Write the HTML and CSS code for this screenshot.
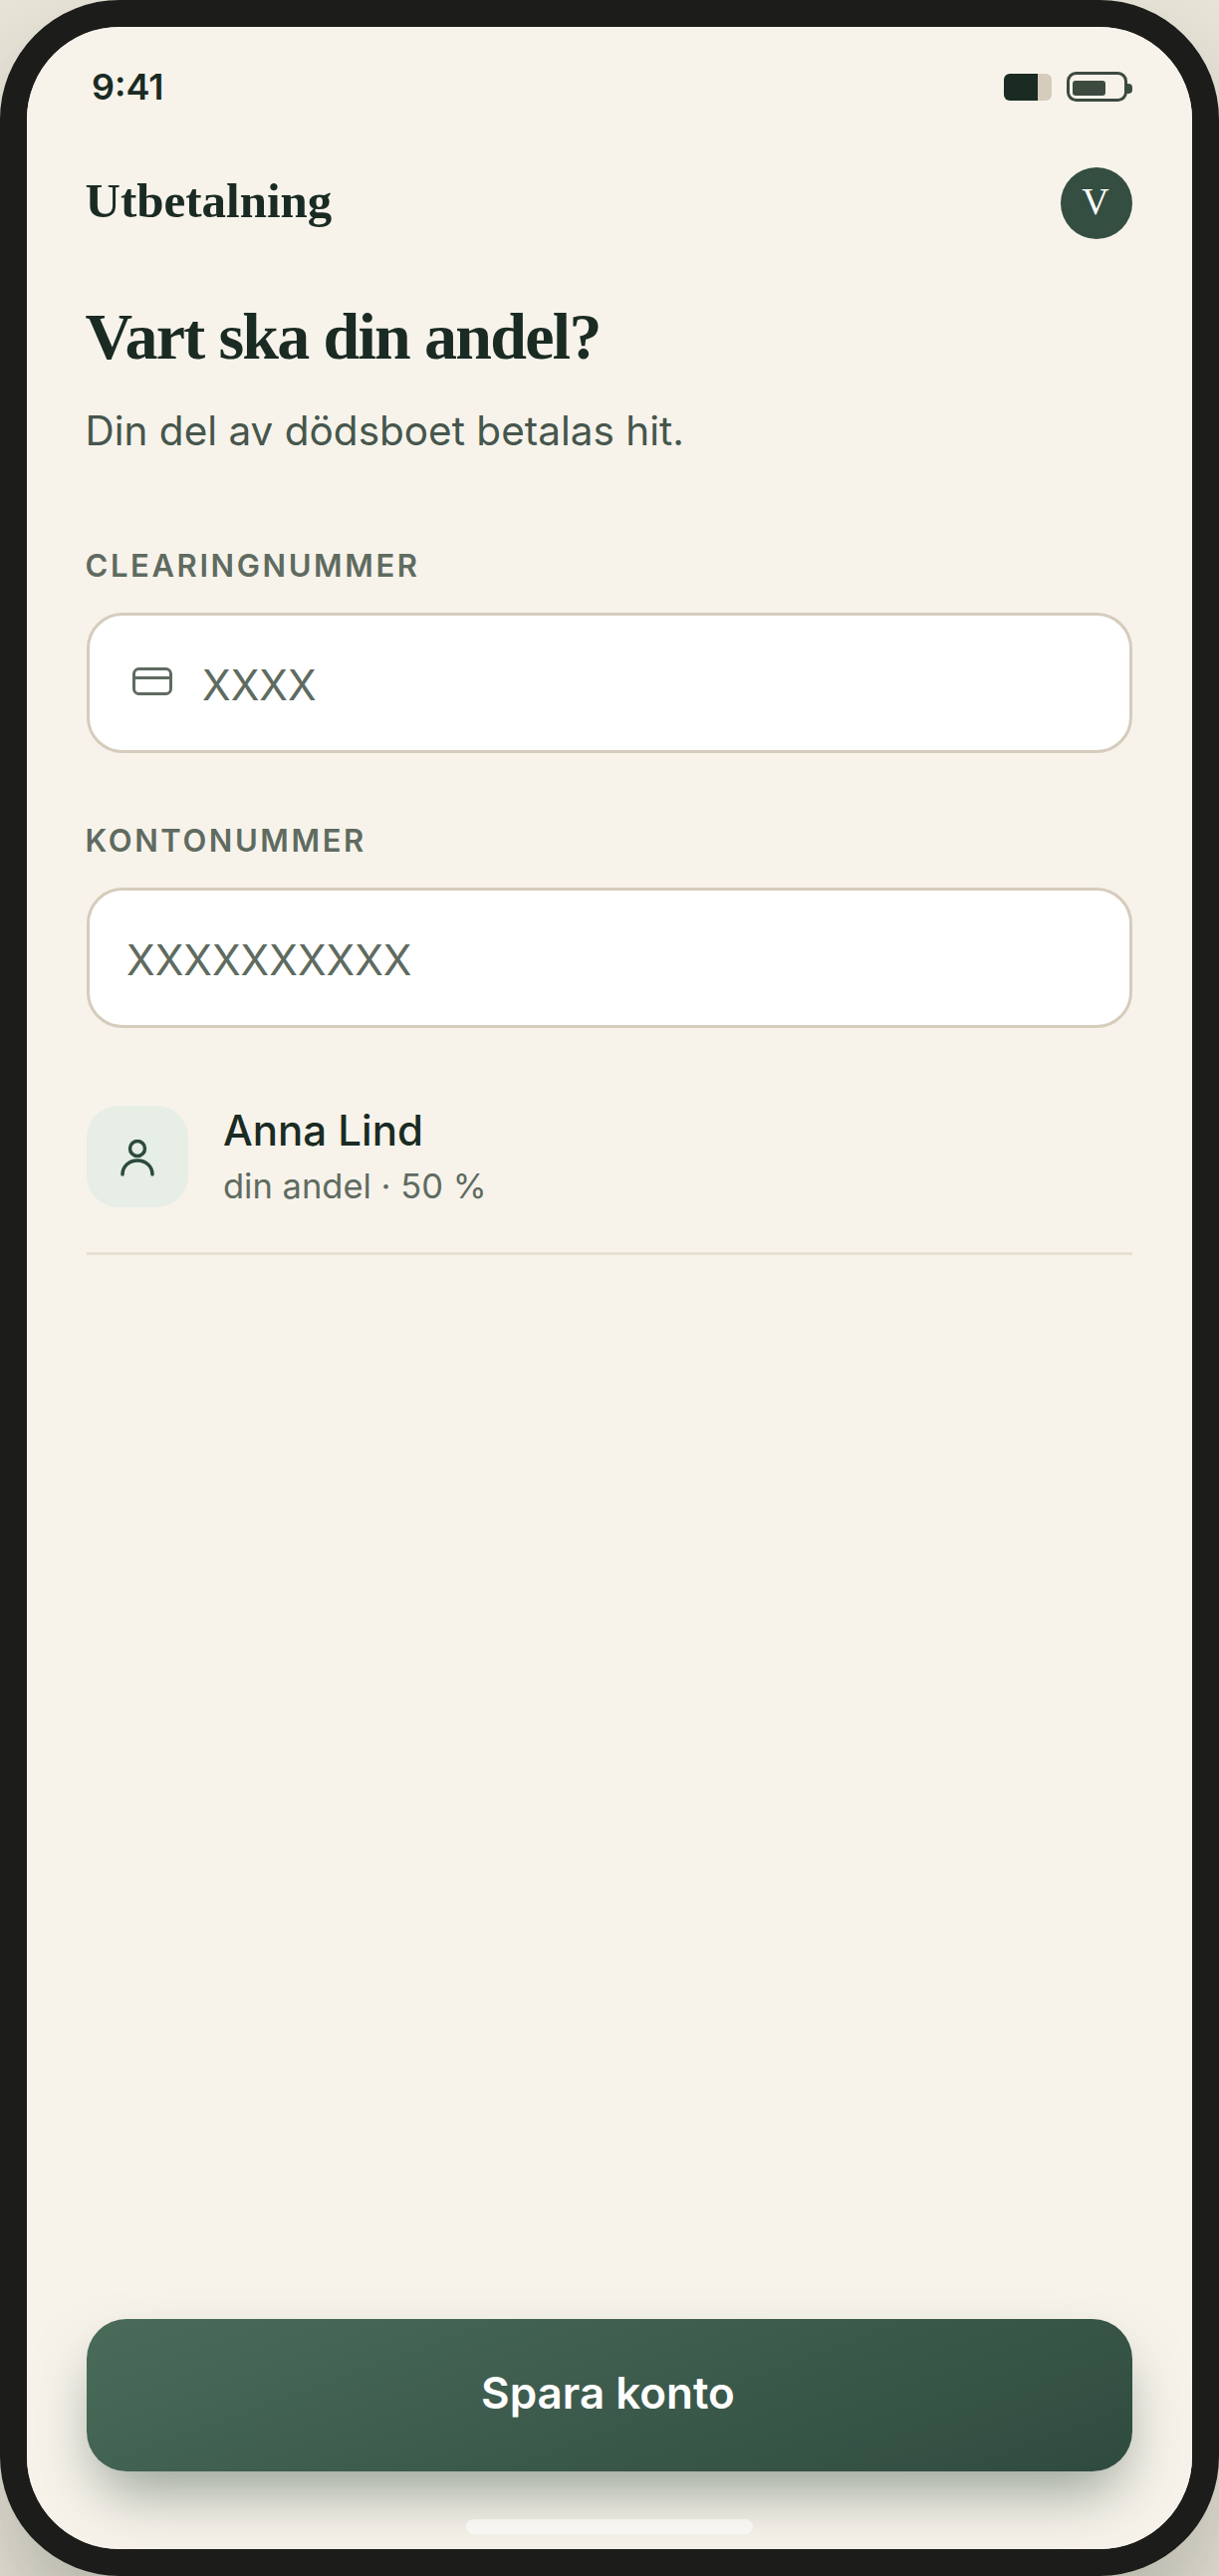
FILE: index.html
```html
<!DOCTYPE html>
<html lang="sv">
  <head>
    <meta charset="UTF-8" />
    <meta name="viewport" content="width=device-width, initial-scale=1.0" />
    <title>Utbetalning</title>
    <link rel="stylesheet" href="styles.css">
  </head>

  <body>
    <div class="phone">
      <div class="screen">
        <div class="status">
          <span class="time">9:41</span>
          <div class="status-icons">
            <div class="signal"><div class="signal-fill"></div></div>
            <svg class="battery" width="66" height="30" viewBox="0 0 66 30">
              <rect x="1.5" y="1.5" width="58" height="27" rx="8" fill="none" stroke="#3d4a40" stroke-width="3" />
              <rect x="6" y="9" width="33" height="15" rx="3" fill="#3d4a40" />
              <path d="M60 12h2a4 4 0 0 1 4 4v2a4 4 0 0 1-4 4h-2z" fill="#3d4a40" />
            </svg>
          </div>
        </div>

        <main class="content">
          <header class="topbar">
            <span class="topbar-title">Utbetalning</span>
            <div class="avatar">V</div>
          </header>

          <h1 class="title">Vart ska din andel?</h1>
          <p class="lead">Din del av dödsboet betalas hit.</p>

          <label class="field-label" for="clearing">CLEARINGNUMMER</label>
          <div class="field">
            <svg class="card-icon" width="40" height="28" viewBox="0 0 40 28" fill="none" stroke="#5f6b60" stroke-width="3">
              <rect x="1.5" y="1.5" width="37" height="25" rx="5" />
              <path d="M1.5 10.5h37" />
            </svg>
            <input id="clearing" class="field-input" placeholder="XXXX" />
          </div>

          <label class="field-label" for="konto">KONTONUMMER</label>
          <div class="field">
            <input id="konto" class="field-input" placeholder="XXXXXXXXXX" />
          </div>

          <div class="heir">
            <div class="heir-icon">
              <svg width="34" height="38" viewBox="0 0 34 38" fill="none" stroke="#2d4a3e" stroke-width="3.500" stroke-linecap="round">
                <circle cx="17" cy="9" r="7.5" />
                <path d="M2 35c0-8 6.500-14 15-14s15 6 15 14" />
              </svg>
            </div>
            <div class="heir-text">
              <div class="heir-name">Anna Lind</div>
              <div class="heir-share">din andel · 50 %</div>
            </div>
          </div>
        </main>

        <footer class="footer">
          <button class="save">Spara konto</button>
          <div class="home-bar"></div>
        </footer>
      </div>
    </div>
  </body>
</html>
```

FILE: styles.css
```css
* {
  box-sizing: border-box;
  margin: 0;
  padding: 0;
}

:root {
  --ink: #1a2b23;
  --green: #344e41;
  --muted: #5f6b60;
  --line: #d6ccbc;
  --paper: #f7f3eb;
}

html,
body {
  width: 1224px;
  height: 2586px;
  overflow: hidden;
}

body {
  background: #e8e4d8;
  font-family: Inter, "Liberation Sans", sans-serif;
  color: var(--ink);
}

.phone {
  width: 1224px;
  height: 2586px;
  border: 27px solid #1c1c1a;
  border-radius: 120px;
  background: var(--paper);
  box-shadow: 0 60px 100px rgba(30, 40, 30, 0.25);
}

.screen {
  height: 100%;
  border-radius: 93px;
  overflow: hidden;
  display: flex;
  flex-direction: column;
  background: var(--paper);
}

/* status bar */
.status {
  display: flex;
  justify-content: space-between;
  align-items: center;
  height: 60px;
  margin-top: 30px;
  padding: 0 60px 0 65px;
}

.time {
  font-size: 36px;
  font-weight: 600;
}

.status-icons {
  display: flex;
  align-items: center;
  gap: 15px;
}

.signal {
  width: 48px;
  height: 27px;
  border-radius: 6px;
  background: var(--line);
  overflow: hidden;
}

.signal-fill {
  width: 34px;
  height: 100%;
  background: var(--ink);
}

.battery {
  display: block;
}

/* main */
.content {
  flex: 1;
  padding: 51px 60px 0;
}

.topbar {
  display: flex;
  justify-content: space-between;
  align-items: center;
}

.topbar-title {
  font-family: "Liberation Serif", serif;
  font-size: 49px;
  font-weight: 700;
  margin: -5px 0 0 -1.500px;
}

.avatar {
  width: 72px;
  height: 72px;
  padding: 0 2px 4px 0;
  border-radius: 50%;
  background: var(--green);
  color: #fff;
  font-family: "Liberation Serif", serif;
  font-size: 38px;
  display: flex;
  align-items: center;
  justify-content: center;
}

.title {
  font-family: "Liberation Serif", serif;
  font-size: 66px;
  font-weight: 700;
  letter-spacing: -1.7px;
  line-height: 80px;
  margin: 58px 0 0 -1.500px;
}

.lead {
  font-size: 40.5px;
  line-height: 60px;
  color: #46564c;
  margin: 25px 0 0 -1.500px;
}

.field-label {
  display: block;
  font-size: 31px;
  font-weight: 600;
  letter-spacing: 2.6px;
  line-height: 40px;
  color: var(--muted);
  margin: 85px 0 0 -1.500px;
}

.field {
  height: 141px;
  margin-top: 27px;
  padding: 0 37px;
  display: flex;
  align-items: center;
  gap: 30px;
  background: #fff;
  border: 3px solid var(--line);
  border-radius: 36px;
}

.field + .field-label {
  margin-top: 68px;
}

.card-icon {
  flex: none;
  margin: -4px 0 0 6px;
}

.field-input {
  flex: 1;
  min-width: 0;
  padding-top: 3px;
  border: none;
  outline: none;
  background: transparent;
  font-family: inherit;
  font-size: 42px;
  color: var(--ink);
}

.field-input::placeholder {
  color: var(--muted);
  opacity: 1;
}

.heir {
  display: flex;
  align-items: flex-start;
  gap: 35px;
  margin-top: 78px;
  padding-bottom: 45px;
  border-bottom: 3px solid #e6dfd2;
}

.heir-icon {
  width: 102px;
  height: 102px;
  border-radius: 32px;
  background: #e6eee6;
  display: flex;
  align-items: center;
  justify-content: center;
}

.heir-icon svg {
  display: block;
  margin-top: 3px;
}

.heir-text {
  margin-top: -2px;
}

.heir-name {
  font-size: 42px;
  font-weight: 500;
  line-height: 54px;
}

.heir-share {
  font-size: 34.5px;
  line-height: 42px;
  margin-top: 8px;
  color: var(--muted);
}

/* bottom button */
.footer {
  padding: 0 60px 15px;
}

.save {
  display: block;
  width: 100%;
  height: 153px;
  padding: 0 3px 5px 0;
  border: none;
  border-radius: 40px;
  background: linear-gradient(160deg, #4a6b5a, #2f4b3f);
  box-shadow: 0 30px 60px -12px rgba(45, 74, 62, 0.5);
  color: #fff;
  font-family: inherit;
  font-size: 44px;
  font-weight: 600;
}

.home-bar {
  width: 288px;
  height: 15px;
  margin: 48px auto 0;
  border-radius: 8px;
  background: rgba(255, 255, 255, 0.5);
}
```
